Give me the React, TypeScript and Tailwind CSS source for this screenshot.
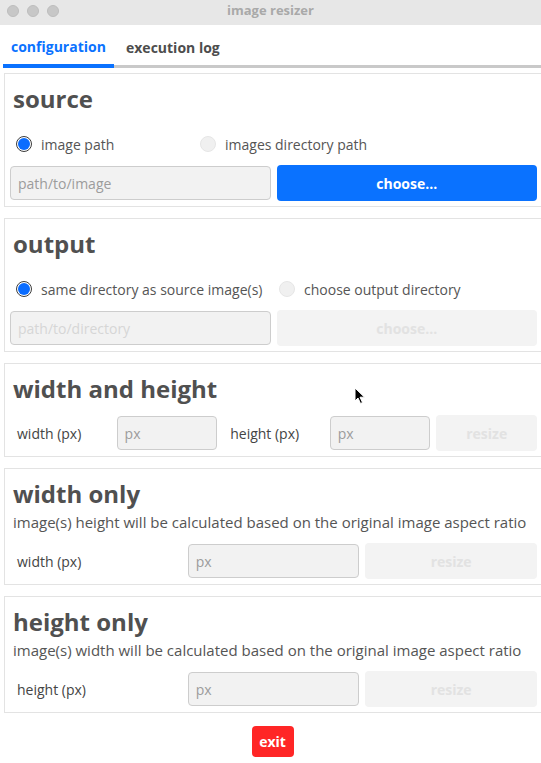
import React from "react";

const font = { fontFamily: '"Open Sans", "Noto Sans", sans-serif' };

function Radio({ checked, label, width }: { checked?: boolean; label: string; width?: string }) {
  return (
    <label className={`flex items-center ${width ?? ""}`}>
      {checked ? (
        <span className="w-4 h-4 rounded-full border border-[#3c3c3c] bg-white p-[1px] flex">
          <span className="flex-1 rounded-full bg-[#0a6cff]" />
        </span>
      ) : (
        <span className="w-4 h-4 rounded-full border border-[#e6e6e6] bg-[#f0f0f0]" />
      )}
      <span className="ml-[9px] text-[14px] text-[#555]">{label}</span>
    </label>
  );
}

function Input({ placeholder, disabled }: { placeholder: string; disabled?: boolean }) {
  return (
    <input
      disabled={disabled}
      placeholder={placeholder}
      className={`h-[34px] w-full rounded-[4px] border border-[#cdcdcd] bg-[#f2f2f2] px-[7px] text-[14px] outline-none ${
        disabled ? "placeholder:text-[#d6d6d6]" : "placeholder:text-[#9c9c9c]"
      }`}
      style={font}
    />
  );
}

function Button({ label, primary }: { label: string; primary?: boolean }) {
  return (
    <button
      className={`h-9 w-full rounded-[4px] text-[14px] font-bold ${
        primary ? "bg-[#0a72ff] text-white" : "bg-[#f3f3f3] text-[#e2e2e2]"
      }`}
      style={font}
    >
      {label}
    </button>
  );
}

function Panel({ title, children }: { title: string; children: React.ReactNode }) {
  return (
    <section className="ml-[4px] w-[545px] border border-[#e3e3e3] pt-[9px] pb-[5px] pl-[5px] pr-[11px]">
      <h2 className="pl-[3px] text-[24px] font-bold leading-[32px] text-[#505050]">{title}</h2>
      {children}
    </section>
  );
}

function Label({ text }: { text: string }) {
  return <span className="pl-[7px] text-[14px] text-[#444]">{text}</span>;
}

export default function App() {
  return (
    <div className="relative w-[541px] h-[763px] overflow-hidden bg-white" style={font}>
      {/* title bar */}
      <div className="grid h-[25px] grid-cols-[1fr_auto_1fr] items-center bg-[#e7e7e7] pb-[4px]">
        <div className="flex gap-2 pl-[7px]">
          <span className="h-3 w-3 rounded-full bg-[#c7c7c7] border border-[#bdbdbd]" />
          <span className="h-3 w-3 rounded-full bg-[#c7c7c7] border border-[#bdbdbd]" />
          <span className="h-3 w-3 rounded-full bg-[#c7c7c7] border border-[#bdbdbd]" />
        </div>
        <span className="text-[13px] font-bold text-[#a9a9a9]">image resizer</span>
        <div />
      </div>

      {/* tabs */}
      <div className="ml-[3px] flex items-end">
        <div className="w-[111px] border-b-4 border-[#0a72ff] pl-[8px] pt-[12px] pb-[7px] text-[14px] font-bold leading-[20px] text-[#0a72ff]">
          configuration
        </div>
        <div className="flex-1 border-b-[3px] border-[#c9c9c9] pl-[12px] pt-[12px] pb-[7px] text-[14px] font-bold leading-[20px] text-[#4d4d4d]">
          execution log
        </div>
      </div>

      <div className="mt-[5px] flex flex-col gap-[11px]">
        <Panel title="source">
          <div className="mt-[19px] flex h-5 items-center pl-[6px]">
            <Radio checked label="image path" width="w-[184px]" />
            <Radio label="images directory path" />
          </div>
          <div className="mt-[11px] grid grid-cols-2 items-center gap-[6px]">
            <Input placeholder="path/to/image" />
            <Button label="choose..." primary />
          </div>
        </Panel>

        <Panel title="output">
          <div className="mt-[19px] flex h-5 items-center pl-[6px]">
            <Radio checked label="same directory as source image(s)" width="w-[263px]" />
            <Radio label="choose output directory" />
          </div>
          <div className="mt-[11px] grid grid-cols-2 items-center gap-[6px]">
            <Input placeholder="path/to/directory" disabled />
            <Button label="choose..." />
          </div>
        </Panel>

        <Panel title="width and height">
          <div className="mt-[10px] grid grid-cols-5 items-center gap-[6px]">
            <Label text="width (px)" />
            <Input placeholder="px" />
            <Label text="height (px)" />
            <Input placeholder="px" />
            <Button label="resize" />
          </div>
        </Panel>

        <Panel title="width only">
          <p className="mt-[2px] pl-[3px] text-[15px] leading-[20px] text-[#555]">
            image(s) height will be calculated based on the original image aspect ratio
          </p>
          <div className="mt-[11px] grid grid-cols-3 items-center gap-[6px]">
            <Label text="width (px)" />
            <Input placeholder="px" />
            <Button label="resize" />
          </div>
        </Panel>

        <Panel title="height only">
          <p className="mt-[2px] pl-[3px] text-[15px] leading-[20px] text-[#555]">
            image(s) width will be calculated based on the original image aspect ratio
          </p>
          <div className="mt-[11px] grid grid-cols-3 items-center gap-[6px]">
            <Label text="height (px)" />
            <Input placeholder="px" />
            <Button label="resize" />
          </div>
        </Panel>
      </div>

      <div className="mt-[13px] flex justify-center pl-[4px]">
        <button className="h-[31px] w-[42px] rounded-[4px] bg-[#ff2626] text-[14px] font-bold text-white" style={font}>
          exit
        </button>
      </div>

      {/* mouse pointer */}
      <svg className="absolute left-[354px] top-[387px]" width="12" height="18" viewBox="0 0 12 18">
        <path d="M1 1 L1 14 L4 11 L6.5 16.5 L8.5 15.5 L6 10.2 L10.5 10.2 Z" fill="#000" stroke="#fff" strokeWidth="1" />
      </svg>
    </div>
  );
}
